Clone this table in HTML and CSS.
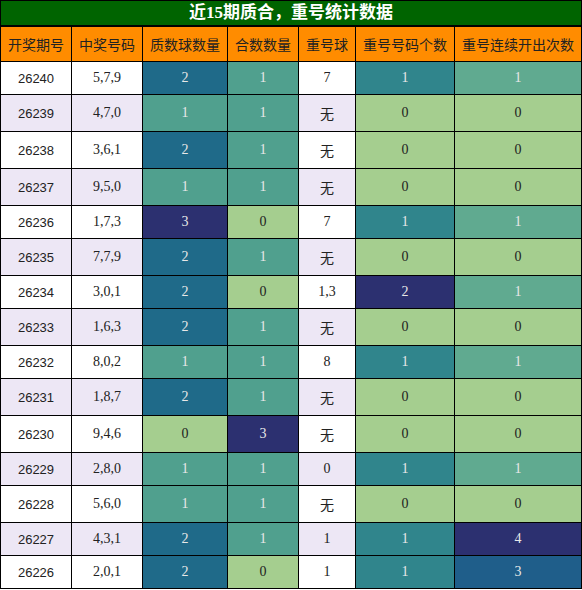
FILE: index.html
```html
<!DOCTYPE html>
<html lang="zh-CN">
<head>
    <meta charset="UTF-8">
    <title>近15期质合，重号统计数据</title>
    <link rel="stylesheet" href="styles.css">
</head>
<body>
    <table class="stats">
        <thead>
            <tr>
                <th class="title" colspan="7">近15期质合，重号统计数据</th>
            </tr>
            <tr class="head">
                <th>开奖期号</th>
                <th>中奖号码</th>
                <th>质数球数量</th>
                <th>合数数量</th>
                <th>重号球</th>
                <th>重号号码个数</th>
                <th>重号连续开出次数</th>
            </tr>
        </thead>
        <tbody>
            <tr><td class="issue">26240</td><td>5,7,9</td><td class="q2">2</td><td class="q1">1</td><td>7</td><td class="r1">1</td><td class="s1">1</td></tr>
            <tr><td class="issue">26239</td><td>4,7,0</td><td class="q1">1</td><td class="q1">1</td><td>无</td><td class="z">0</td><td class="z">0</td></tr>
            <tr><td class="issue">26238</td><td>3,6,1</td><td class="q2">2</td><td class="q1">1</td><td>无</td><td class="z">0</td><td class="z">0</td></tr>
            <tr><td class="issue">26237</td><td>9,5,0</td><td class="q1">1</td><td class="q1">1</td><td>无</td><td class="z">0</td><td class="z">0</td></tr>
            <tr><td class="issue">26236</td><td>1,7,3</td><td class="top">3</td><td class="z">0</td><td>7</td><td class="r1">1</td><td class="s1">1</td></tr>
            <tr><td class="issue">26235</td><td>7,7,9</td><td class="q2">2</td><td class="q1">1</td><td>无</td><td class="z">0</td><td class="z">0</td></tr>
            <tr><td class="issue">26234</td><td>3,0,1</td><td class="q2">2</td><td class="z">0</td><td>1,3</td><td class="top">2</td><td class="s1">1</td></tr>
            <tr><td class="issue">26233</td><td>1,6,3</td><td class="q2">2</td><td class="q1">1</td><td>无</td><td class="z">0</td><td class="z">0</td></tr>
            <tr><td class="issue">26232</td><td>8,0,2</td><td class="q1">1</td><td class="q1">1</td><td>8</td><td class="r1">1</td><td class="s1">1</td></tr>
            <tr><td class="issue">26231</td><td>1,8,7</td><td class="q2">2</td><td class="q1">1</td><td>无</td><td class="z">0</td><td class="z">0</td></tr>
            <tr><td class="issue">26230</td><td>9,4,6</td><td class="z">0</td><td class="top">3</td><td>无</td><td class="z">0</td><td class="z">0</td></tr>
            <tr><td class="issue">26229</td><td>2,8,0</td><td class="q1">1</td><td class="q1">1</td><td>0</td><td class="r1">1</td><td class="s1">1</td></tr>
            <tr><td class="issue">26228</td><td>5,6,0</td><td class="q1">1</td><td class="q1">1</td><td>无</td><td class="z">0</td><td class="z">0</td></tr>
            <tr><td class="issue">26227</td><td>4,3,1</td><td class="q2">2</td><td class="q1">1</td><td>1</td><td class="r1">1</td><td class="top">4</td></tr>
            <tr><td class="issue">26226</td><td>2,0,1</td><td class="q2">2</td><td class="z">0</td><td>1</td><td class="r1">1</td><td class="s3">3</td></tr>
        </tbody>
    </table>
</body>
</html>
```

FILE: styles.css
```css
body {
    margin: 0;
    background-color: #fff;
    font-family: "Liberation Serif", "Noto Sans CJK SC", serif;
    font-size: 14px;
    color: #222;
}
.stats {
    width: 100%;
    border-collapse: collapse;
    text-align: center;
}
.stats th,
.stats td {
    border: 1px solid #000;
    padding: 8px 7px;
    white-space: nowrap;
}
/* title bar */
.stats .title {
    background-color: #006400;
    color: #fff;
    font-size: 17px;
    font-weight: bold;
    line-height: 24px;
    padding: 0;
    border-bottom: 2px solid #000;
}
.head th {
    background-color: #ff8c00;
    font-weight: normal;
    padding: 7px 7px;
}
tbody tr:nth-child(even) {
    background-color: #ede7f5;
}
.issue {
    font-family: "Liberation Sans", "Noto Sans CJK SC", sans-serif;
    font-size: 13px;
}
/* heat colours, per column scale */
.z {
    background-color: #a5ce8f;
    color: #222;
}
.q1 {
    background-color: #50a08e;
    color: #e8e8e8;
}
.q2 {
    background-color: #1f6a89;
    color: #e8e8e8;
}
.top {
    background-color: #2c3070;
    color: #e8e8e8;
}
.r1 {
    background-color: #30858c;
    color: #e8e8e8;
}
.s1 {
    background-color: #60aa90;
    color: #e8e8e8;
}
.s3 {
    background-color: #1f5e8a;
    color: #e8e8e8;
}
```
